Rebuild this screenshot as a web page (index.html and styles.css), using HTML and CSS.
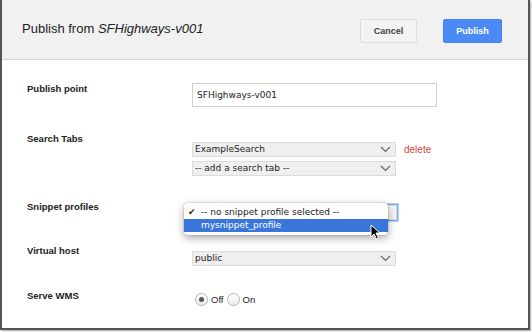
FILE: index.html
```html
<!DOCTYPE html>
<html lang="en">
<head>
    <meta charset="UTF-8">
    <title>Publish</title>
    <link rel="stylesheet" href="styles.css">
</head>
<body>
    <div class="dialog">
        <div class="dialog-header">
            <h1 class="title">Publish from <em>SFHighways-v001</em></h1>
            <div class="actions">
                <a href="#" class="btn btn-cancel">Cancel</a>
                <a href="#" class="btn btn-publish">Publish</a>
            </div>
        </div>

        <div class="dialog-body">
            <div class="row row-point">
                <div class="label">Publish point</div>
                <div class="controls">
                    <div class="text-input">SFHighways-v001</div>
                </div>
            </div>

            <div class="row row-tabs">
                <div class="label">Search Tabs</div>
                <div class="controls">
                    <div class="select-line">
                        <div class="select">ExampleSearch <span class="chev"><svg width="11" height="7" viewBox="0 0 11 7"><path d="M1 1 L5.5 5.5 L10 1" fill="none" stroke="#666" stroke-width="1.2"/></svg></span></div>
                        <a href="#" class="delete">delete</a>
                    </div>
                    <div class="select">-- add a search tab -- <span class="chev"><svg width="11" height="7" viewBox="0 0 11 7"><path d="M1 1 L5.5 5.5 L10 1" fill="none" stroke="#666" stroke-width="1.2"/></svg></span></div>
                </div>
            </div>

            <div class="row row-snippet">
                <div class="label">Snippet profiles</div>
                <div class="controls">
                    <div class="select select-focus">&nbsp;</div>
                    <div class="popup">
                        <div class="option"><span class="check">&#10004;</span>-- no snippet profile selected --</div>
                        <div class="option selected">mysnippet_profile</div>
                    </div>
                    <svg class="cursor" width="11" height="16" viewBox="0 0 11 16"><path d="M1 1 L1 13 L4 10 L6.5 15 L8.5 14 L6 9 L10 9 Z" fill="#000" stroke="#fff" stroke-width="1"/></svg>
                </div>
            </div>

            <div class="row row-host">
                <div class="label">Virtual host</div>
                <div class="controls">
                    <div class="select">public <span class="chev"><svg width="11" height="7" viewBox="0 0 11 7"><path d="M1 1 L5.5 5.5 L10 1" fill="none" stroke="#666" stroke-width="1.2"/></svg></span></div>
                </div>
            </div>

            <div class="row row-wms">
                <div class="label">Serve WMS</div>
                <div class="controls radios">
                    <span class="radio checked"></span><span class="radio-text">Off</span>
                    <span class="radio"></span><span class="radio-text">On</span>
                </div>
            </div>
        </div>
    </div>
</body>
</html>
```

FILE: styles.css
```css
* {
    margin: 0;
    padding: 0;
    box-sizing: border-box;
}

body {
    background: #ffffff;
    font-family: "Liberation Sans", Arial, sans-serif;
    width: 532px;
    height: 332px;
    overflow: hidden;
}

.dialog {
    width: 530px;
    height: 330px;
    background: #fff;
    border-left: 2px solid #555;
    border-right: 2px solid #555;
    border-bottom: 2px solid #555;
    box-shadow: 1px 1px 2px rgba(0,0,0,0.35);
}

.dialog-header {
    height: 60px;
    background: #f1f1f1;
    border-bottom: 1px solid #d6d6d6;
    display: flex;
    align-items: center;
    justify-content: space-between;
    padding: 0 26px 0 20px;
}

.title {
    font-size: 13px;
    font-weight: normal;
    color: #222;
    margin-top: -2px;
}

.title em {
    font-style: italic;
}

.actions {
    display: flex;
    gap: 26px;
    margin-top: 2px;
}

.btn {
    display: flex;
    align-items: center;
    justify-content: center;
    height: 24px;
    font-size: 9px;
    font-weight: bold;
    text-decoration: none;
    border-radius: 2px;
}

.btn-cancel {
    width: 57px;
    background: #f3f3f3;
    border: 1px solid #dcdcdc;
    color: #444;
}

.btn-publish {
    width: 59px;
    background: #4a8af4;
    border: 1px solid #4285f4;
    color: #fff;
}

.dialog-body {
    padding: 22px 0 0 25px;
}

.row {
    display: grid;
    grid-template-columns: 165px 1fr;
}

.label {
    font-size: 9.5px;
    font-weight: bold;
    color: #222;
    line-height: 14px;
}

.row-tabs { margin-top: 25px; }
.row-snippet { margin-top: 24px; }
.row-host { margin-top: 24px; }
.row-wms { margin-top: 23px; }

.row-point .controls { padding-top: 1px; }
.row-tabs .controls { padding-top: 10px; }
.row-snippet .controls { padding-top: 5px; position: relative; }
.row-host .controls { padding-top: 7px; }
.row-wms .controls { padding-top: 4px; }

.text-input {
    width: 245px;
    height: 24px;
    border: 1px solid #cfcfcf;
    font-family: "DejaVu Sans", sans-serif;
    font-size: 9px;
    color: #222;
    padding-left: 4px;
    line-height: 22px;
}

.select-line {
    display: flex;
    align-items: center;
    gap: 8px;
    margin-bottom: 4px;
}

.select {
    position: relative;
    width: 204px;
    height: 15px;
    background: #efefef;
    border: 1px solid #dcdcdc;
    font-family: "DejaVu Sans", sans-serif;
    font-size: 9px;
    color: #222;
    padding-left: 2px;
    line-height: 13px;
}

.chev {
    position: absolute;
    right: 4px;
    top: 3px;
    line-height: 0;
}

.delete {
    font-size: 10px;
    color: #d9443a;
    text-decoration: none;
}

.select-focus {
    width: 205px;
    background: #f4f4f4;
    box-shadow: 0 0 0 1.5px #7aa7e9;
}

.popup {
    position: absolute;
    left: -8px;
    top: 3px;
    width: 204px;
    height: 32px;
    background: #fff;
    border-radius: 4px;
    box-shadow: 0 3px 8px rgba(0,0,0,0.35), 0 0 0 1px rgba(0,0,0,0.08);
    padding-top: 3px;
    font-family: "DejaVu Sans", sans-serif;
    font-size: 9px;
    color: #222;
}

.option {
    height: 13px;
    line-height: 13px;
    padding-left: 17px;
    position: relative;
}

.check {
    position: absolute;
    left: 4px;
    font-size: 9px;
}

.option.selected {
    background: #3a76da;
    color: #fff;
}

.cursor {
    position: absolute;
    left: 178px;
    top: 24px;
}

.radios {
    display: flex;
    align-items: center;
    font-size: 9.5px;
    color: #222;
    padding-left: 3px;
}

.radio {
    width: 13px;
    height: 13px;
    border-radius: 50%;
    border: 1px solid #b5b5b5;
    background: linear-gradient(#ffffff, #ececec);
    display: flex;
    align-items: center;
    justify-content: center;
}

.radio.checked::after {
    content: "";
    width: 5px;
    height: 5px;
    border-radius: 50%;
    background: #555;
}

.radio-text {
    margin: 0 3px 0 3px;
}
```
